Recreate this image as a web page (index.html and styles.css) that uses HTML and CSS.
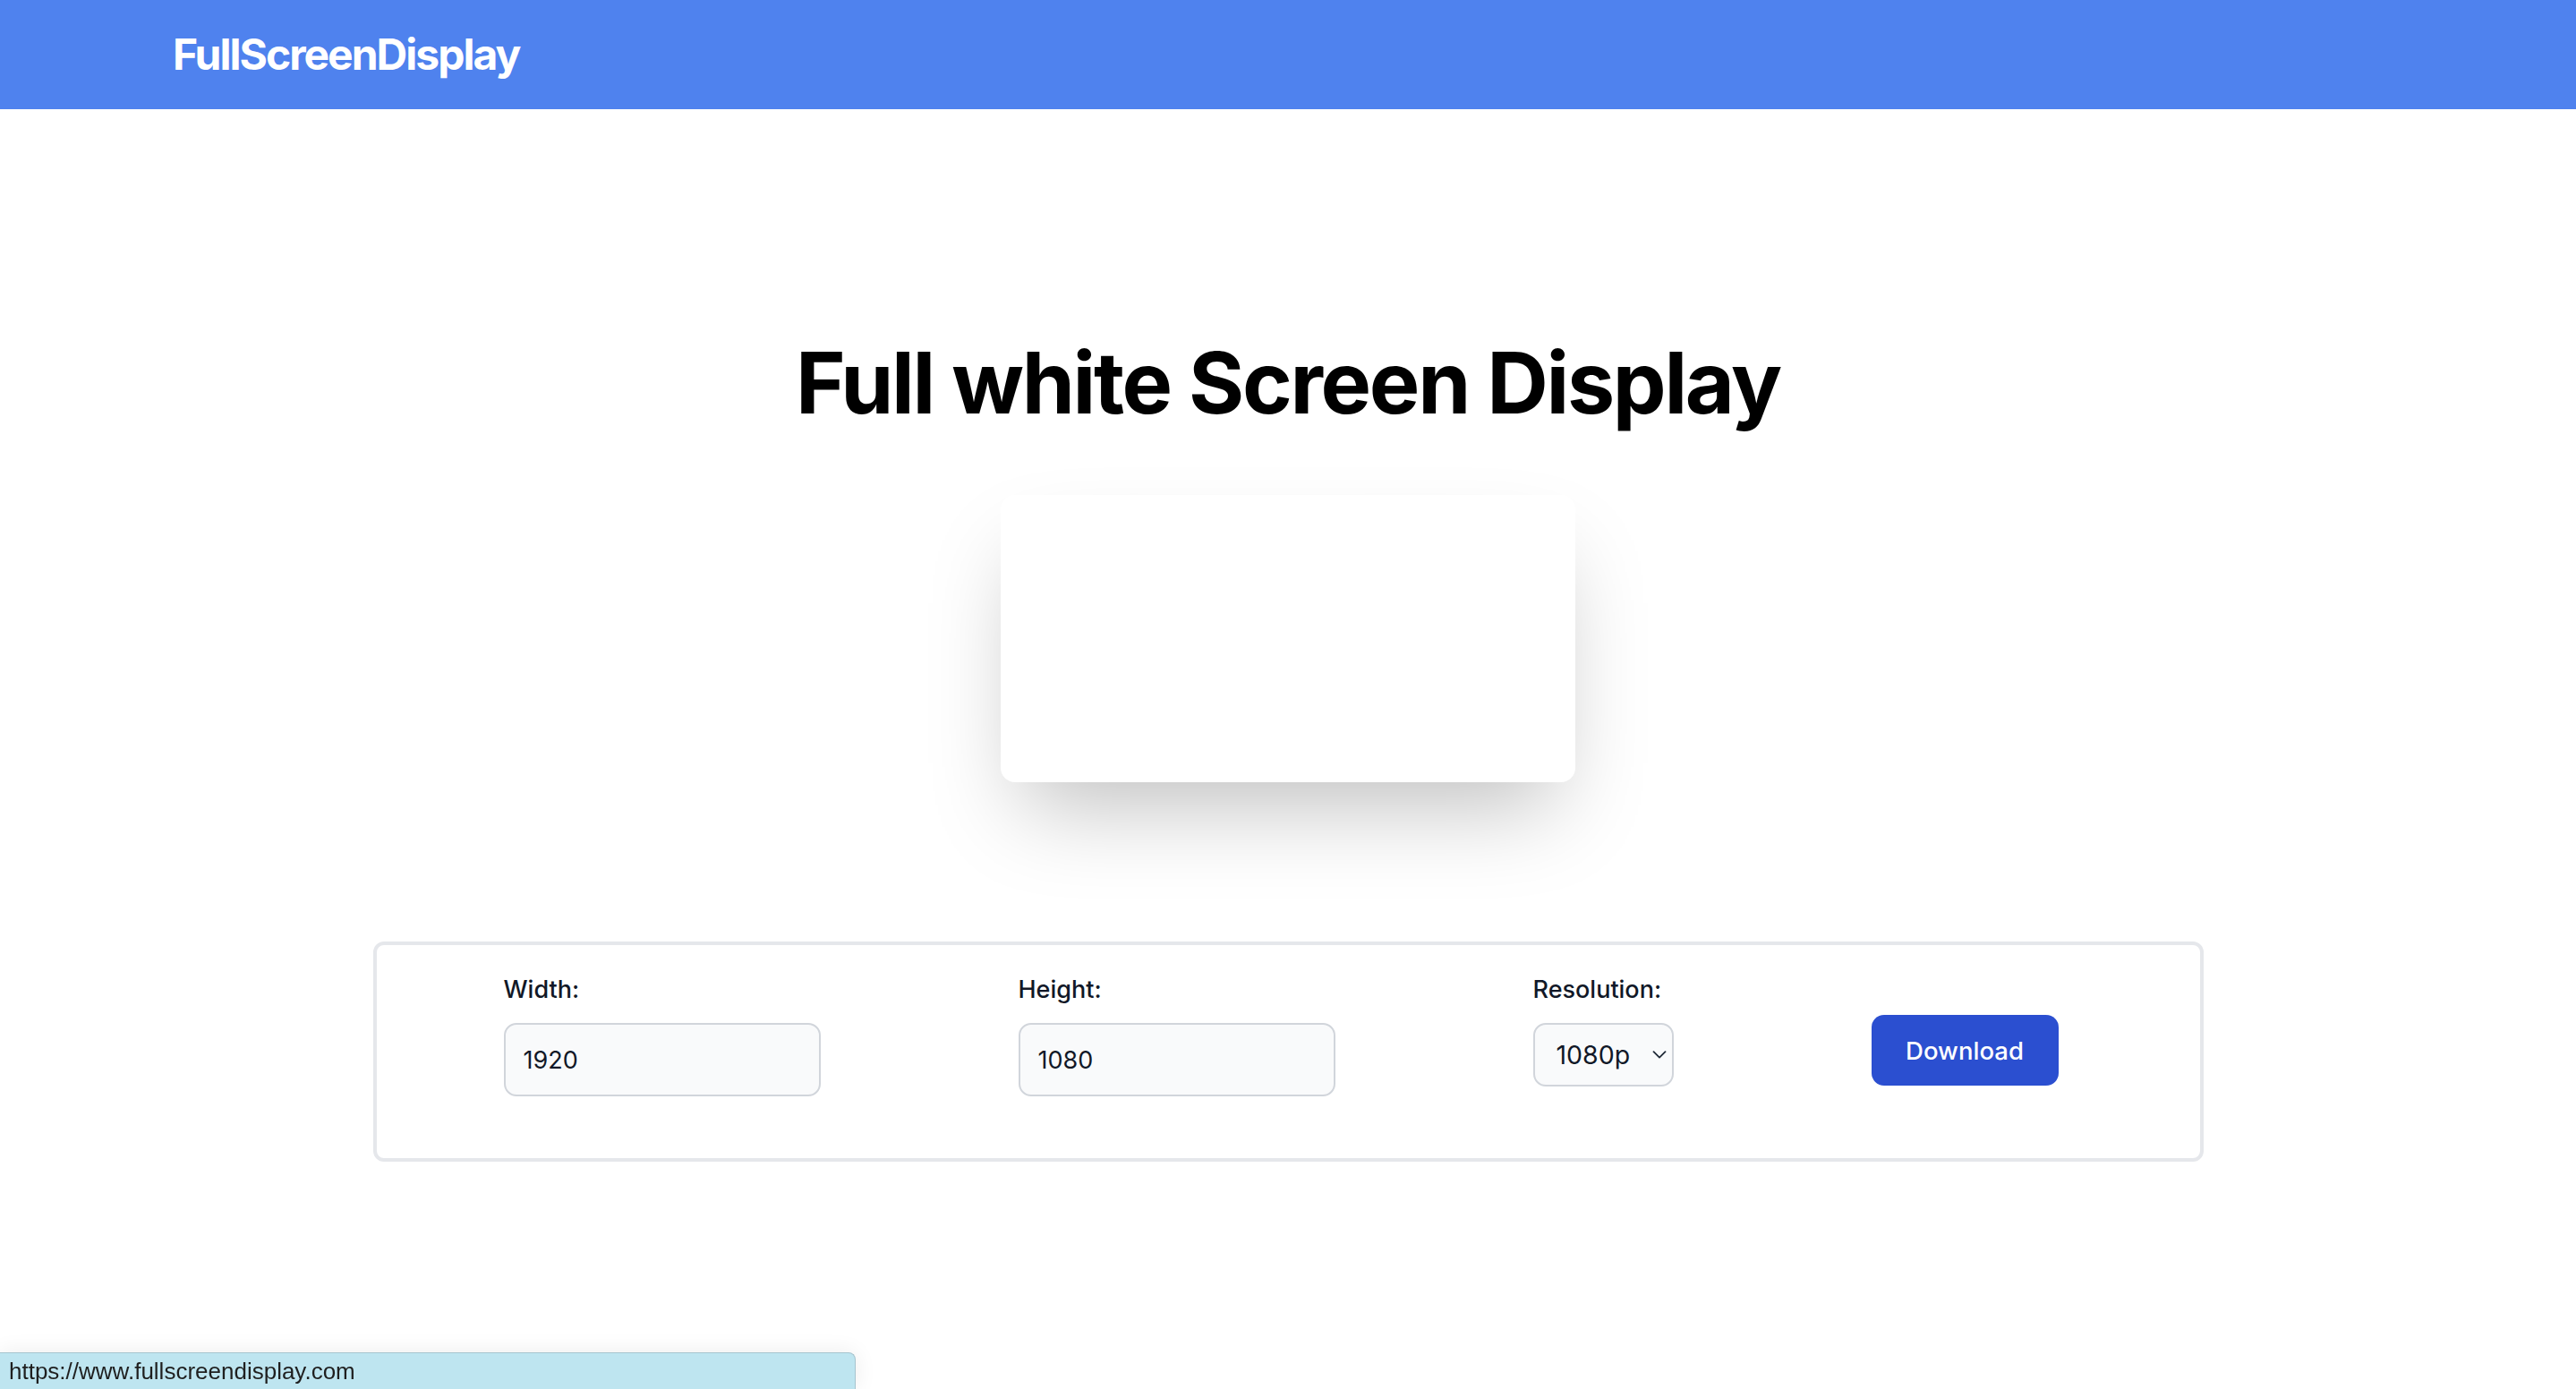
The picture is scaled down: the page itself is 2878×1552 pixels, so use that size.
FILE: index.html
```html
<!DOCTYPE html>
<html lang="en">
<head>
<meta charset="utf-8">
<title>FullScreenDisplay</title>
<link rel="stylesheet" href="styles.css">
</head>
<body>
<header class="topbar">
  <a class="logo" href="#">FullScreenDisplay</a>
</header>
<main class="main">
  <h1 class="title">Full white Screen Display</h1>
  <div class="preview"></div>
  <section class="panel">
    <div class="field">
      <label class="label" for="w">Width:</label>
      <input class="input" id="w" type="text" value="1920">
    </div>
    <div class="field">
      <label class="label" for="h">Height:</label>
      <input class="input" id="h" type="text" value="1080">
    </div>
    <div class="field">
      <label class="label" for="r">Resolution:</label>
      <div class="select-wrap">
        <select class="select" id="r">
          <option>1080p</option>
          <option>720p</option>
          <option>4K</option>
        </select>
        <svg class="chev" width="16" height="9" viewBox="0 0 16 9"><path d="M1.5 1.2 L8 7.6 L14.5 1.2" fill="none" stroke="#1f2937" stroke-width="1.8" stroke-linecap="round" stroke-linejoin="round"/></svg>
      </div>
    </div>
    <button class="btn" type="button">Download</button>
  </section>
</main>
<div class="status">https://www.fullscreendisplay.com</div>
</body>
</html>
```
FILE: styles.css
```css
html, body {
  margin: 0;
  padding: 0;
  background: #ffffff;
}
body {
  font-family: Inter, "Noto Sans", "Liberation Sans", sans-serif;
  color: #111827;
}
.topbar {
  height: 122px;
  background: #4f82ee;
  display: flex;
  align-items: center;
  padding-left: 193px;
}
.logo {
  color: #ffffff;
  font-weight: 700;
  font-size: 48px;
  line-height: 1;
  letter-spacing: -2px;
  text-decoration: none;
}
.main {
  display: flex;
  flex-direction: column;
  align-items: center;
}
.title {
  margin: 258px 0 0 0;
  font-size: 95px;
  line-height: 96px;
  font-weight: 700;
  letter-spacing: -2.3px;
  color: #000000;
}
.preview {
  margin-top: 77px;
  width: 642px;
  height: 321px;
  background: #ffffff;
  border-radius: 16px;
  box-shadow: 0 50px 100px -24px rgba(0, 0, 0, 0.25);
}
.panel {
  margin-top: 178px;
  width: 2045px;
  height: 246px;
  box-sizing: border-box;
  border: 4px solid #e5e7eb;
  border-radius: 12px;
  display: flex;
  align-items: flex-start;
  gap: 221px;
  padding: 30px 0 0 142px;
}
.field {
  display: flex;
  flex-direction: column;
}
.label {
  font-size: 27px;
  line-height: 40px;
  font-weight: 500;
  color: #111827;
  margin-bottom: 17px;
}
.input {
  width: 354px;
  height: 82px;
  box-sizing: border-box;
  border: 2px solid #d1d5db;
  border-radius: 14px;
  background: #f9fafb;
  padding: 0 20px;
  font-family: Inter, "Noto Sans", sans-serif;
  font-size: 27px;
  color: #111827;
  outline: none;
}
.select-wrap {
  position: relative;
  width: 157px;
  height: 71px;
}
.select {
  appearance: none;
  -webkit-appearance: none;
  width: 157px;
  height: 71px;
  box-sizing: border-box;
  border: 2px solid #d1d5db;
  border-radius: 14px;
  background: #f9fafb;
  padding: 0 0 0 24px;
  font-family: Inter, "Noto Sans", sans-serif;
  font-size: 28.5px;
  color: #111827;
  outline: none;
}
.chev {
  position: absolute;
  left: 133px;
  top: 31px;
  pointer-events: none;
}
.btn {
  margin-top: 48px;
  width: 209px;
  height: 79px;
  border: none;
  border-radius: 14px;
  background: #2b4fd0;
  color: #ffffff;
  font-family: Inter, "Noto Sans", sans-serif;
  font-size: 27.5px;
  font-weight: 500;
  cursor: pointer;
}
.status {
  position: fixed;
  left: 0;
  bottom: 0;
  width: 956px;
  height: 41px;
  box-sizing: border-box;
  background: #bee5f0;
  border-top: 1px solid #a7c5cf;
  border-right: 1px solid #a7c5cf;
  border-top-right-radius: 8px;
  box-shadow: 0 0 24px rgba(0, 0, 0, 0.08);
  font-family: "Liberation Sans", Arial, sans-serif;
  font-size: 26px;
  line-height: 40px;
  padding-left: 10px;
  color: #1f1f1f;
}
```
